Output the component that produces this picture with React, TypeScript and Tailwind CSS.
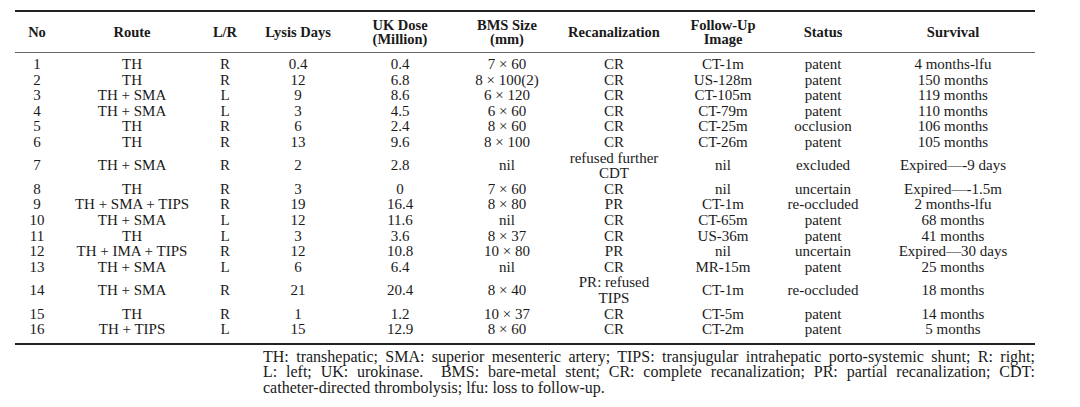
import React from "react";

type Row = string[];

const rows: Row[] = [
  ["1", "TH", "R", "0.4", "0.4", "7 × 60", "CR", "CT-1m", "patent", "4 months-lfu"],
  ["2", "TH", "R", "12", "6.8", "8 × 100(2)", "CR", "US-128m", "patent", "150 months"],
  ["3", "TH + SMA", "L", "9", "8.6", "6 × 120", "CR", "CT-105m", "patent", "119 months"],
  ["4", "TH + SMA", "L", "3", "4.5", "6 × 60", "CR", "CT-79m", "patent", "110 months"],
  ["5", "TH", "R", "6", "2.4", "8 × 60", "CR", "CT-25m", "occlusion", "106 months"],
  ["6", "TH", "R", "13", "9.6", "8 × 100", "CR", "CT-26m", "patent", "105 months"],
  ["7", "TH + SMA", "R", "2", "2.8", "nil", "refused further\nCDT", "nil", "excluded", "Expired—-9 days"],
  ["8", "TH", "R", "3", "0", "7 × 60", "CR", "nil", "uncertain", "Expired—-1.5m"],
  ["9", "TH + SMA + TIPS", "R", "19", "16.4", "8 × 80", "PR", "CT-1m", "re-occluded", "2 months-lfu"],
  ["10", "TH + SMA", "L", "12", "11.6", "nil", "CR", "CT-65m", "patent", "68 months"],
  ["11", "TH", "L", "3", "3.6", "8 × 37", "CR", "US-36m", "patent", "41 months"],
  ["12", "TH + IMA + TIPS", "R", "12", "10.8", "10 × 80", "PR", "nil", "uncertain", "Expired—30 days"],
  ["13", "TH + SMA", "L", "6", "6.4", "nil", "CR", "MR-15m", "patent", "25 months"],
  ["14", "TH + SMA", "R", "21", "20.4", "8 × 40", "PR: refused\nTIPS", "CT-1m", "re-occluded", "18 months"],
  ["15", "TH", "R", "1", "1.2", "10 × 37", "CR", "CT-5m", "patent", "14 months"],
  ["16", "TH + TIPS", "L", "15", "12.9", "8 × 60", "CR", "CT-2m", "patent", "5 months"],
];

const headers = [
  "No",
  "Route",
  "L/R",
  "Lysis Days",
  "UK Dose\n(Million)",
  "BMS Size\n(mm)",
  "Recanalization",
  "Follow-Up\nImage",
  "Status",
  "Survival",
];

const grid =
  "grid grid-cols-[44px_146px_40px_106px_98px_116px_98px_120px_80px_172px]";

function Cell({ text, last }: { text: string; last: boolean }) {
  return (
    <div
      className={`flex flex-col items-center justify-center text-center whitespace-nowrap ${
        last ? "pl-2" : ""
      }`}
    >
      {text.split("\n").map((line, i) => (
        <span key={i}>{line}</span>
      ))}
    </div>
  );
}

export default function App() {
  return (
    <div
      className="w-[1080px] h-[407px] bg-white text-[#1a1a1a] overflow-hidden"
      style={{ fontFamily: '"Liberation Serif", "Times New Roman", serif' }}
    >
      <div className="ml-[15px] w-[1020px] pt-[10px]">
        <div className="h-[2px] bg-[#222]" />

        <div className={`${grid} h-[40px] font-bold text-[14.5px] leading-[14px]`}>
          {headers.map((h, i) => (
            <Cell key={i} text={h} last={i === headers.length - 1} />
          ))}
        </div>
        <div className="h-px bg-[#666]" />

        <div className="pt-[4px] pb-[5px] text-[15px] leading-[15.6px]">
          {rows.map((r) => (
            <div key={r[0]} className={grid}>
              {r.map((c, i) => (
                <Cell key={i} text={c} last={i === r.length - 1} />
              ))}
            </div>
          ))}
        </div>
        <div className="h-[2px] bg-[#222]" />

        <div className="ml-[248px] w-[772px] mt-[4px] text-[16px] leading-[15.5px] whitespace-nowrap">
          <div className="text-justify [text-align-last:justify]">
            TH: transhepatic; SMA: superior mesenteric artery; TIPS: transjugular intrahepatic
            porto-systemic shunt; R: right;
          </div>
          <div className="text-justify [text-align-last:justify] whitespace-pre">
            {"L: left; UK: urokinase.  BMS: bare-metal stent; CR: complete recanalization; PR: partial recanalization; CDT:"}
          </div>
          <div>catheter-directed thrombolysis; lfu: loss to follow-up.</div>
        </div>
      </div>
    </div>
  );
}
